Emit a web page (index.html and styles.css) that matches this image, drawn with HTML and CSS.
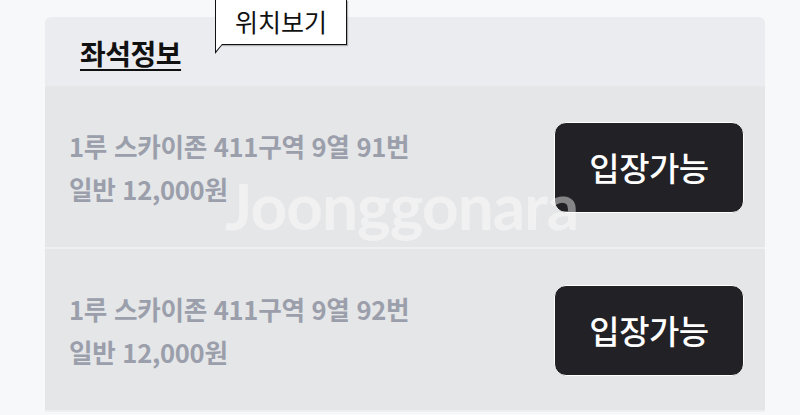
FILE: index.html
```html
<!DOCTYPE html>
<html lang="ko">
<head>
    <meta charset="UTF-8">
    <meta name="viewport" content="width=device-width, initial-scale=1.0">
    <title>좌석정보</title>
    <link rel="stylesheet" href="styles.css">
</head>
<body>
    <div class="seat-card">
        <div class="seat-header">
            <h2 class="seat-title">좌석정보</h2>
            <div class="tooltip">위치보기</div>
        </div>

        <div class="seat-row">
            <div class="seat-info">
                <p>1루 스카이존 411구역 9열 91번</p>
                <p>일반 12,000원</p>
            </div>
            <button class="enter-btn">입장가능</button>
        </div>

        <div class="seat-row">
            <div class="seat-info">
                <p>1루 스카이존 411구역 9열 92번</p>
                <p>일반 12,000원</p>
            </div>
            <button class="enter-btn">입장가능</button>
        </div>

        <div class="watermark">Joonggonara</div>
    </div>
</body>
</html>
```

FILE: styles.css
```css
body {
    margin: 0;
    padding: 17px 35px 0 45px;
    background-color: #f7f8fa;
    font-family: "Noto Sans CJK KR", "Noto Sans", sans-serif;
    overflow: hidden;
}

.seat-card {
    position: relative;
    width: 720px;
    border-radius: 6px 6px 0 0;
}

.seat-header {
    position: relative;
    height: 69px;
    background-color: #ebecf0;
    border-radius: 6px 6px 0 0;
    display: flex;
    align-items: center;
    padding-left: 35px;
}

.seat-title {
    margin: 2px 0 0;
    font-size: 28px;
    font-weight: 700;
    color: #111;
    text-decoration: underline;
    text-underline-offset: 4px;
    text-decoration-thickness: 2px;
    letter-spacing: -0.5px;
}

.tooltip {
    position: absolute;
    left: 170px;
    top: -17px;
    width: 132px;
    height: 45px;
    padding-top: 6px;
    box-sizing: border-box;
    background: #fff;
    border: 1px solid #111;
    border-top: none;
    box-shadow: 1px 1px 1px rgba(0, 0, 0, 0.25);
    font-size: 25px;
    color: #111;
    text-align: center;
    line-height: 30px;
}

.tooltip::after {
    content: "";
    position: absolute;
    left: -1px;
    bottom: -10px;
    width: 0;
    height: 0;
    border-left: 8px solid #111;
    border-bottom: 10px solid transparent;
}

.tooltip::before {
    content: "";
    position: absolute;
    left: 0;
    bottom: -7px;
    width: 0;
    height: 0;
    border-left: 6px solid #fff;
    border-bottom: 7px solid transparent;
    z-index: 1;
}

.seat-row {
    height: 163px;
    background-color: #e5e6e8;
    border-top: 1px solid #e6e7e9;
    border-bottom: 2px solid #eeeff1;
    display: flex;
    align-items: center;
    justify-content: space-between;
    padding: 0 21px 0 24px;
    box-sizing: border-box;
}

.seat-info p {
    margin: 0;
    font-size: 25.6px;
    font-weight: 700;
    color: #9b9fab;
    line-height: 43px;
    letter-spacing: -0.3px;
}

.enter-btn {
    width: 190px;
    height: 91px;
    background-color: #222226;
    color: #fff;
    border: 1px solid #fff;
    border-radius: 12px;
    font-family: inherit;
    font-size: 33px;
    font-weight: 500;
    letter-spacing: -0.5px;
    cursor: pointer;
}

.watermark {
    position: absolute;
    left: 180px;
    top: 150px;
    font-family: "Lato", "Noto Sans", sans-serif;
    font-size: 64px;
    font-weight: 700;
    color: rgba(255, 255, 255, 0.45);
    pointer-events: none;
    letter-spacing: -1px;
}
```
